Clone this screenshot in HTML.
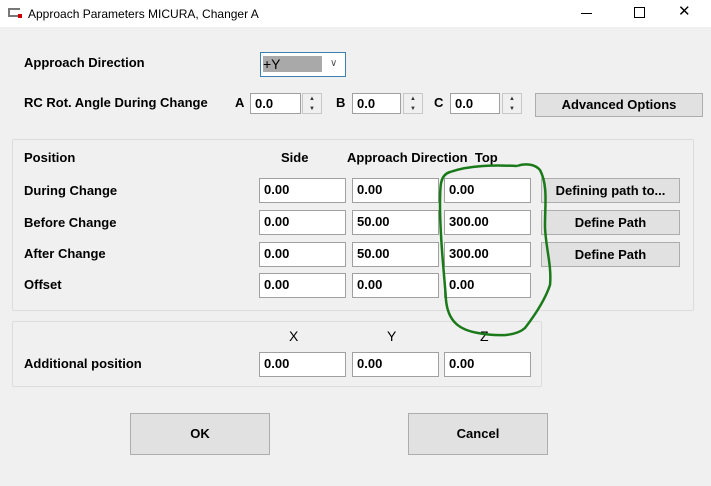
<!DOCTYPE html>
<html><head><style>
*{box-sizing:border-box;margin:0;padding:0}
body{width:711px;height:486px;background:#f0f0f0;font-family:"Liberation Sans",sans-serif;font-size:13px;font-weight:bold;color:#000;position:relative;overflow:hidden}
.a{position:absolute;white-space:nowrap}
.t{position:absolute;line-height:16px}
.in{position:absolute;background:#fff;border:1px solid #a0a0a0;padding:3px 0 0 4px;line-height:16px}
.btn{position:absolute;background:#e1e1e1;border:1px solid #adadad;text-align:center}
.grp{position:absolute;border:1px solid #dcdcdc;border-radius:2px}
.sp{position:absolute;width:20px;border:1px solid #c8c8c8;background:#f0f0f0}
.sp div{height:50%;font-size:6px;text-align:center;line-height:10px;color:#333;font-weight:normal}
</style></head><body>
<div class="a" style="left:0;top:0;width:711px;height:27px;background:#fff"></div>
<div class="a" style="left:8px;top:8px;width:12px;height:9px;border:2px solid #777;border-right:none"></div>
<div class="a" style="left:18px;top:14px;width:4px;height:4px;background:#c00"></div>
<div class="t" style="left:28px;top:6px;font-weight:normal;font-size:12px">Approach Parameters MICURA, Changer A</div>
<div class="a" style="left:581px;top:13px;width:11px;height:1px;background:#000"></div>
<div class="a" style="left:634px;top:7px;width:11px;height:11px;border:1px solid #000"></div>
<div class="t" style="left:678px;top:4px;font-weight:normal;font-size:15px">✕</div>

<div class="t" style="left:24px;top:55px">Approach Direction</div>
<div class="a" style="left:260px;top:52px;width:86px;height:25px;border:1px solid #3c7fb1;background:#fff"></div>
<div class="a" style="left:263px;top:56px;width:59px;height:16px;background:#a9a9a9"></div>
<div class="t" style="left:263px;top:56px;font-weight:normal;font-size:14px">+Y</div>
<div class="t" style="left:330px;top:56px;font-weight:normal;font-size:10px;color:#555">∨</div>

<div class="t" style="left:24px;top:95px">RC Rot. Angle During Change</div>
<div class="t" style="left:235px;top:95px">A</div>
<div class="in" style="left:250px;top:93px;width:51px;height:21px;padding-top:2px">0.0</div>
<div class="sp" style="left:302px;top:93px;height:21px"><div>▲</div><div>▼</div></div>
<div class="t" style="left:336px;top:95px">B</div>
<div class="in" style="left:352px;top:93px;width:49px;height:21px;padding-top:2px">0.0</div>
<div class="sp" style="left:403px;top:93px;height:21px"><div>▲</div><div>▼</div></div>
<div class="t" style="left:434px;top:95px">C</div>
<div class="in" style="left:450px;top:93px;width:50px;height:21px;padding-top:2px">0.0</div>
<div class="sp" style="left:502px;top:93px;height:21px"><div>▲</div><div>▼</div></div>
<div class="btn" style="left:535px;top:93px;width:168px;height:24px;line-height:22px">Advanced Options</div>

<div class="grp" style="left:12px;top:139px;width:682px;height:172px"></div>
<div class="t" style="left:24px;top:150px">Position</div>
<div class="t" style="left:281px;top:150px">Side</div>
<div class="t" style="left:347px;top:150px">Approach Direction&nbsp; Top</div>

<div class="t" style="left:24px;top:183px">During Change</div>
<div class="t" style="left:24px;top:215px">Before Change</div>
<div class="t" style="left:24px;top:246px">After Change</div>
<div class="t" style="left:24px;top:277px">Offset</div>

<div class="in" style="left:259px;top:178px;width:87px;height:25px">0.00</div>
<div class="in" style="left:352px;top:178px;width:87px;height:25px">0.00</div>
<div class="in" style="left:444px;top:178px;width:87px;height:25px">0.00</div>
<div class="in" style="left:259px;top:210px;width:87px;height:25px">0.00</div>
<div class="in" style="left:352px;top:210px;width:87px;height:25px">50.00</div>
<div class="in" style="left:444px;top:210px;width:87px;height:25px">300.00</div>
<div class="in" style="left:259px;top:242px;width:87px;height:25px">0.00</div>
<div class="in" style="left:352px;top:242px;width:87px;height:25px">50.00</div>
<div class="in" style="left:444px;top:242px;width:87px;height:25px">300.00</div>
<div class="in" style="left:259px;top:273px;width:87px;height:25px">0.00</div>
<div class="in" style="left:352px;top:273px;width:87px;height:25px">0.00</div>
<div class="in" style="left:444px;top:273px;width:87px;height:25px">0.00</div>

<div class="btn" style="left:541px;top:178px;width:139px;height:25px;line-height:23px">Defining path to...</div>
<div class="btn" style="left:541px;top:210px;width:139px;height:25px;line-height:23px">Define Path</div>
<div class="btn" style="left:541px;top:242px;width:139px;height:25px;line-height:23px">Define Path</div>

<div class="grp" style="left:12px;top:321px;width:530px;height:66px"></div>
<div class="t" style="left:289px;top:328px;font-weight:normal;font-size:14px">X</div>
<div class="t" style="left:387px;top:328px;font-weight:normal;font-size:14px">Y</div>
<div class="t" style="left:480px;top:328px;font-weight:normal;font-size:14px">Z</div>
<div class="t" style="left:24px;top:356px">Additional position</div>
<div class="in" style="left:259px;top:352px;width:87px;height:25px">0.00</div>
<div class="in" style="left:352px;top:352px;width:87px;height:25px">0.00</div>
<div class="in" style="left:444px;top:352px;width:87px;height:25px">0.00</div>

<div class="btn" style="left:130px;top:413px;width:140px;height:42px;line-height:40px">OK</div>
<div class="btn" style="left:408px;top:413px;width:140px;height:42px;line-height:40px">Cancel</div>

<svg class="a" style="left:0;top:0" width="711" height="486"><path d="M517 166 C525 163 535 164 540 170 C548 185 545 205 545 225 C545 245 552 265 550 285 C545 300 535 315 525 328 C515 337 495 336 478 333 C460 330 448 322 446 300 C444 270 440 240 440 205 C440 185 440 175 450 172 C470 165 495 165 517 166" fill="none" stroke="#1a7a1a" stroke-width="2.5"/></svg>
</body></html>
